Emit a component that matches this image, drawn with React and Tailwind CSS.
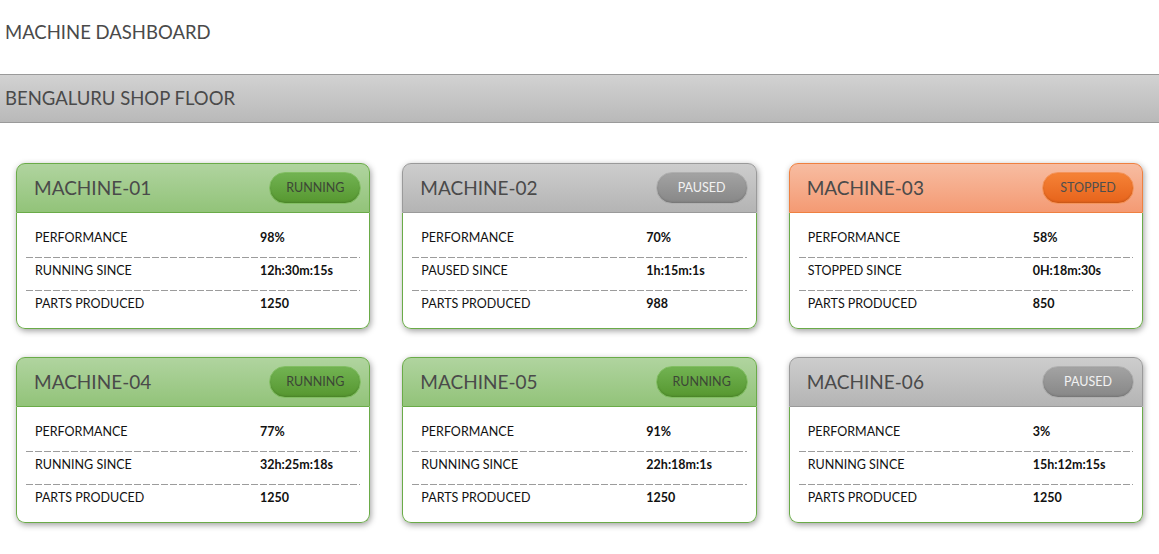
const MACHINES = [
  { name: 'MACHINE-01', status: 'running', perf: '98%', sinceLabel: 'RUNNING SINCE', since: '12h:30m:15s', parts: '1250' },
  { name: 'MACHINE-02', status: 'paused', perf: '70%', sinceLabel: 'PAUSED SINCE', since: '1h:15m:1s', parts: '988' },
  { name: 'MACHINE-03', status: 'stopped', perf: '58%', sinceLabel: 'STOPPED SINCE', since: '0H:18m:30s', parts: '850' },
  { name: 'MACHINE-04', status: 'running', perf: '77%', sinceLabel: 'RUNNING SINCE', since: '32h:25m:18s', parts: '1250' },
  { name: 'MACHINE-05', status: 'running', perf: '91%', sinceLabel: 'RUNNING SINCE', since: '22h:18m:1s', parts: '1250' },
  { name: 'MACHINE-06', status: 'paused', perf: '3%', sinceLabel: 'RUNNING SINCE', since: '15h:12m:15s', parts: '1250' },
];

const STATUS = {
  running: {
    label: 'RUNNING',
    header: 'bg-gradient-to-b from-[#b0d49f] to-[#92c379] border-[#6aab48]',
    badge: 'bg-gradient-to-b from-[#72b352] to-[#56972f] border-[#82bf63] text-[#3c4636]',
  },
  paused: {
    label: 'PAUSED',
    header: 'bg-gradient-to-b from-[#cdcdcd] to-[#b4b4b4] border-[#9a9a9a]',
    badge: 'bg-gradient-to-b from-[#a3a3a3] to-[#878787] border-[#b0b0b0] text-[#f2f2f2]',
  },
  stopped: {
    label: 'STOPPED',
    header: 'bg-gradient-to-b from-[#f7bca1] to-[#f49a73] border-[#ef8040]',
    badge: 'bg-gradient-to-b from-[#f58236] to-[#e6631a] border-[#f5945a] text-[#4e4e4e]',
  },
};

function Row({ label, value, last }) {
  return (
    <div>
      <div className="flex items-start h-[32px] pt-[4px] px-[9px] text-[12.5px] text-[#111]">
        <span className="w-[225px]">{label}</span>
        <span className="font-bold">{value}</span>
      </div>
      {!last && (
        <div className="h-px bg-[repeating-linear-gradient(to_right,#9c9c9c_0,#9c9c9c_7px,transparent_7px,transparent_9px)]" />
      )}
    </div>
  );
}

function MachineCard({ m }) {
  const cfg = STATUS[m.status];
  return (
    <div className="rounded-[9px] bg-white shadow-[1px_2px_6px_rgba(0,0,0,0.38)]">
      <div className={`h-[50px] flex items-center justify-between pl-[17px] pr-[8px] border rounded-t-[9px] ${cfg.header}`}>
        <span className="text-[19px] text-[#4a4a4a] pt-px">{m.name}</span>
        <span className={`w-[92px] h-[32px] rounded-full border flex items-center justify-center text-[12.5px] shadow-[inset_0_-1px_2px_rgba(0,0,0,0.15)] ${cfg.badge}`}>
          {cfg.label}
        </span>
      </div>
      <div className="border-x border-b border-[#6aab48] rounded-b-[9px] px-[9px] pt-[12px] pb-[5px]">
        <Row label="PERFORMANCE" value={m.perf} />
        <Row label={m.sinceLabel} value={m.since} />
        <Row label="PARTS PRODUCED" value={m.parts} last />
      </div>
    </div>
  );
}

export default function App() {
  return (
    <div className="min-h-screen bg-white font-['Lato',_'Open_Sans',_sans-serif] text-[#4a4a4a]">
      <div className="h-[74px] flex items-center px-[5px] pb-[8px]">
        <h1 className="text-[18.5px]">MACHINE DASHBOARD</h1>
      </div>
      <div className="h-[49px] flex items-center px-[5px] border-y border-[#9a9a9a] bg-gradient-to-b from-[#d2d2d2] to-[#b9b9b9]">
        <h2 className="text-[18.5px]">BENGALURU SHOP FLOOR</h2>
      </div>
      <div className="grid grid-cols-3 gap-x-[32px] gap-y-[28px] px-4 pt-[40px]">
        {MACHINES.map((m) => (
          <MachineCard key={m.name} m={m} />
        ))}
      </div>
    </div>
  );
}
